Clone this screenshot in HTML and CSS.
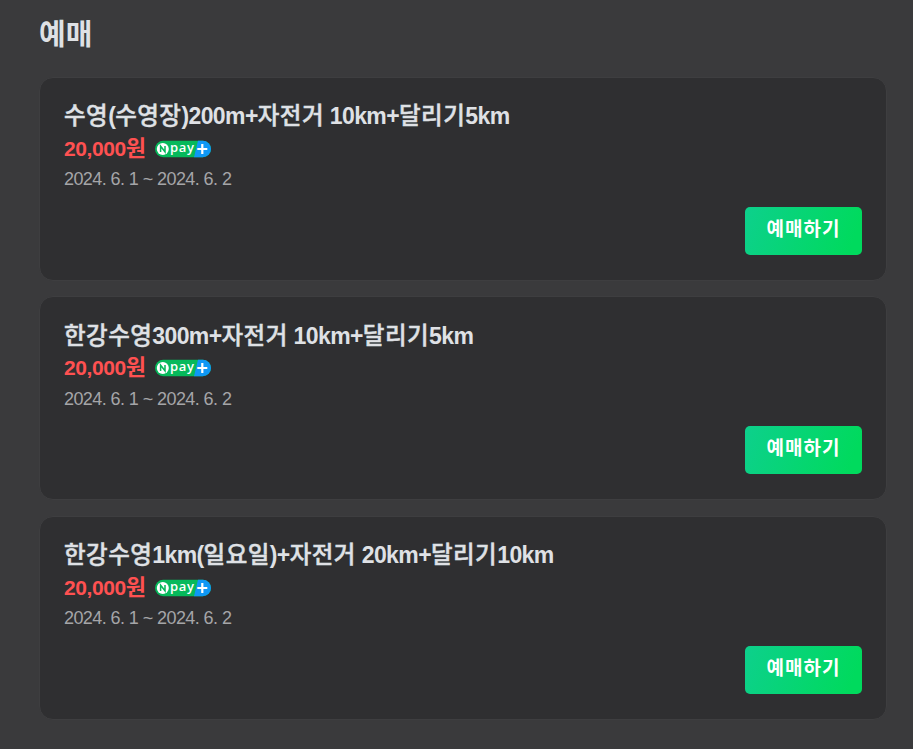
FILE: index.html
```html
<!DOCTYPE html>
<html lang="ko">
<head>
<meta charset="utf-8">
<title>예매</title>
<link rel="stylesheet" href="styles.css">
</head>
<body>
<svg class="defs" aria-hidden="true">
  <symbol id="npay" viewBox="0 0 56 18">
    <rect x="0" y="0.800" width="56" height="16.400" rx="8.200" fill="#06b95b"/>
    <path d="M43 .8h4.800a8.200 8.200 0 0 1 0 16.400H39z" fill="#0f97f5"/>
    <circle cx="7.800" cy="9" r="6" fill="#fff"/>
    <path d="M5.600 12V6.200l4.400 5.600V6" fill="none" stroke="#06b95b" stroke-width="1.500"/>
    <path d="M47.300 4v10M42.300 9h10" stroke="#fff" stroke-width="2.200"/>
  </symbol>
</svg>
<main class="booking">
  <h1 class="heading">예매</h1>
  <ul class="tickets">
    <li class="ticket">
      <h2 class="name"><span class="ko">수영</span>(<span class="ko">수영장</span>)200m+<span class="ko">자전거</span> 10km+<span class="ko">달리기</span>5km</h2>
      <div class="price"><span class="amount">20,000<span class="won">원</span></span><span class="npay"><svg><use href="#npay"/></svg><span class="pay">pay</span></span></div>
      <p class="period">2024. 6. 1 ~ 2024. 6. 2</p>
      <button class="buy">예매하기</button>
    </li>
    <li class="ticket">
      <h2 class="name"><span class="ko">한강수영</span>300m+<span class="ko">자전거</span> 10km+<span class="ko">달리기</span>5km</h2>
      <div class="price"><span class="amount">20,000<span class="won">원</span></span><span class="npay"><svg><use href="#npay"/></svg><span class="pay">pay</span></span></div>
      <p class="period">2024. 6. 1 ~ 2024. 6. 2</p>
      <button class="buy">예매하기</button>
    </li>
    <li class="ticket">
      <h2 class="name"><span class="ko">한강수영</span>1km(<span class="ko">일요일</span>)+<span class="ko">자전거</span> 20km+<span class="ko">달리기</span>10km</h2>
      <div class="price"><span class="amount">20,000<span class="won">원</span></span><span class="npay"><svg><use href="#npay"/></svg><span class="pay">pay</span></span></div>
      <p class="period">2024. 6. 1 ~ 2024. 6. 2</p>
      <button class="buy">예매하기</button>
    </li>
  </ul>
</main>
</body>
</html>
```
FILE: styles.css
```css
* { box-sizing: border-box; margin: 0; padding: 0; }
body { background: #3a3a3c; color: #dfe1e5; font-family: "Liberation Sans", "Noto Sans CJK KR", sans-serif; }
.defs { display: block; width: 0; height: 0; }
.booking { padding: 15px 26px 0 39px; }
.heading { height: 61.500px; font-size: 29px; line-height: 40px; letter-spacing: 0; }
.tickets { display: grid; gap: 15.500px; list-style: none; }
.ticket { display: flex; flex-direction: column; height: 204px; padding: 23.500px 24px 0; border: 1px solid #3e3e40; border-radius: 14px; background: #2f2f31; }
.name { height: 32px; font-size: 23px; line-height: 30px; letter-spacing: -.6px; white-space: nowrap; }
.ko { font-size: 23.500px; letter-spacing: .45px; font-weight: 500; -webkit-text-stroke: .45px currentColor; }
.price { display: flex; align-items: center; height: 31px; gap: 8px; color: #ff5151; }
.amount { font-size: 21px; font-weight: 700; line-height: 30px; letter-spacing: -.4px; }
.won { font-size: 22px; letter-spacing: 1px; }
.npay { display: grid; width: 56px; height: 18px; }
.npay svg, .pay { grid-area: 1 / 1; width: 56px; height: 18px; }
.pay { padding-left: 15px; color: #fff; font: 600 13px/15px "Open Sans", sans-serif; letter-spacing: .6px; z-index: 1; }
.period { height: 42.500px; color: #a5a5a8; font-size: 18px; line-height: 30px; letter-spacing: -.58px; }
.buy { align-self: flex-end; width: 117px; height: 48px; padding-bottom: 2px; border: 0; border-radius: 5px; background: linear-gradient(110deg, #0dd08c, #00da5d 90%); color: #fff; font: 700 19px/28px "Liberation Sans", "Noto Sans CJK KR", sans-serif; letter-spacing: 1px; }
```
